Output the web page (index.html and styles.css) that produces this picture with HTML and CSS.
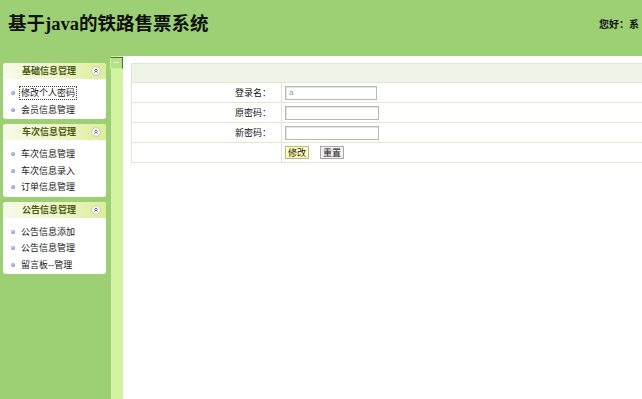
FILE: index.html
```html
<!DOCTYPE html>
<html lang="zh">
<head>
<meta charset="utf-8">
<title>基于java的铁路售票系统</title>
<link rel="stylesheet" href="styles.css">
</head>
<body>
<div class="page">
  <header class="top">
    <h1 class="title">基于java的铁路售票系统</h1>
    <div class="user">您好：系</div>
  </header>
  <div class="content">
    <aside class="sidebar">
      <section class="panel">
        <div class="panel-head">
          <span class="panel-title">基础信息管理</span>
          <svg class="fold" width="10" height="10" viewBox="0 0 10 10"><circle cx="5" cy="5" r="4.4" fill="#f6f6f2" stroke="#c4c4bc" stroke-width="0.8"/><path d="M3.3 4.6 L5 3 L6.7 4.6 M3.3 6.6 L5 5 L6.7 6.6" fill="none" stroke="#666" stroke-width="0.9"/></svg>
        </div>
        <ul class="menu">
          <li><span class="dot"></span><span class="link focused">修改个人密码</span></li>
          <li><span class="dot"></span><span class="link">会员信息管理</span></li>
        </ul>
      </section>
      <section class="panel">
        <div class="panel-head">
          <span class="panel-title">车次信息管理</span>
          <svg class="fold" width="10" height="10" viewBox="0 0 10 10"><circle cx="5" cy="5" r="4.4" fill="#f6f6f2" stroke="#c4c4bc" stroke-width="0.8"/><path d="M3.3 4.6 L5 3 L6.7 4.6 M3.3 6.6 L5 5 L6.7 6.6" fill="none" stroke="#666" stroke-width="0.9"/></svg>
        </div>
        <ul class="menu">
          <li><span class="dot"></span><span class="link">车次信息管理</span></li>
          <li><span class="dot"></span><span class="link">车次信息录入</span></li>
          <li><span class="dot"></span><span class="link">订单信息管理</span></li>
        </ul>
      </section>
      <section class="panel">
        <div class="panel-head">
          <span class="panel-title">公告信息管理</span>
          <svg class="fold" width="10" height="10" viewBox="0 0 10 10"><circle cx="5" cy="5" r="4.4" fill="#f6f6f2" stroke="#c4c4bc" stroke-width="0.8"/><path d="M3.3 4.6 L5 3 L6.7 4.6 M3.3 6.6 L5 5 L6.7 6.6" fill="none" stroke="#666" stroke-width="0.9"/></svg>
        </div>
        <ul class="menu">
          <li><span class="dot"></span><span class="link">公告信息添加</span></li>
          <li><span class="dot"></span><span class="link">公告信息管理</span></li>
          <li><span class="dot"></span><span class="link">留言板--管理</span></li>
        </ul>
      </section>
    </aside>
    <div class="splitter">
      <span class="toggle"></span>
    </div>
    <main class="main">
      <table class="form">
        <tr class="head"><th colspan="2"></th></tr>
        <tr><td class="label">登录名：</td><td class="field"><input class="input readonly" type="text" value="a" readonly></td></tr>
        <tr><td class="label">原密码：</td><td class="field"><input class="input wide" type="password"></td></tr>
        <tr><td class="label">新密码：</td><td class="field"><input class="input wide" type="password"></td></tr>
        <tr><td class="label"></td><td class="field"><div class="buttons"><button class="btn primary" type="button">修改</button><button class="btn" type="button">重置</button></div></td></tr>
      </table>
    </main>
  </div>
</div>
</body>
</html>
```
FILE: styles.css
```css
html, body {
  margin: 0;
  padding: 0;
  background: #ffffff;
  overflow: hidden;
}
.page {
  width: 642px;
  height: 399px;
  display: flex;
  flex-direction: column;
  overflow: hidden;
  font-family: "Noto Sans CJK SC", "Liberation Sans", sans-serif;
  font-size: 9px;
  color: #222;
}
.top {
  flex: 0 0 56px;
  background: #9dcf74;
  display: flex;
  align-items: flex-start;
  white-space: nowrap;
  overflow: hidden;
}
.title {
  flex: 0 0 591px;
  margin: 0;
  padding: 12px 0 0 8px;
  font-family: "Liberation Serif", "Noto Sans CJK SC", serif;
  font-size: 18.5px;
  line-height: 24px;
  font-weight: bold;
  color: #111;
}
.user {
  padding-top: 18px;
  font-family: "Liberation Serif", "Noto Sans CJK SC", serif;
  font-size: 10px;
  line-height: 14px;
  font-weight: bold;
  color: #111;
}
.content {
  flex: 1;
  display: flex;
  min-height: 0;
}
.sidebar {
  flex: 0 0 111px;
  background: #9dcf74;
  padding: 7px 0 0 3px;
  box-sizing: border-box;
}
.panel {
  width: 103px;
  background: #ffffff;
  border-radius: 3px;
  margin-bottom: 5px;
  overflow: hidden;
}
.panel-head {
  height: 16px;
  display: flex;
  align-items: center;
  background: linear-gradient(to right, #f8faea 0%, #eef5c6 55%, #dcee9a 100%);
  padding: 0 5px 0 0;
}
.panel-title {
  flex: 1;
  text-align: center;
  font-weight: bold;
  color: #4b5a12;
  font-size: 9px;
  line-height: 16px;
  padding-left: 4px;
}
.fold {
  display: block;
}
.menu {
  list-style: none;
  margin: 0;
  padding: 6px 0 1px 0;
}
.menu li {
  height: 16.5px;
  display: flex;
  align-items: center;
  padding-left: 8px;
}
.dot {
  width: 4px;
  height: 4px;
  border-radius: 50%;
  background: radial-gradient(circle at 40% 40%, #c6d6f2 0%, #7f9bd2 60%, #5f7cb6 100%);
  margin-right: 6px;
}
.link {
  color: #1a1a1a;
  line-height: 12px;
  padding: 0 1px;
  margin-left: -1px;
}
.link.focused {
  outline: 1px dotted #444;
  outline-offset: 0;
}
.splitter {
  flex: 0 0 12px;
  background: #d3f3a2;
  position: relative;
}
.toggle {
  position: absolute;
  left: -1px;
  top: 1px;
  width: 11px;
  height: 10px;
  background: #b3e28a;
  border-top: 1px solid #50683a;
  border-right: 1px solid #50683a;
  border-left: 1px solid #c9ef9f;
  border-bottom: 1px solid #c9ef9f;
}
.toggle::after {
  content: "";
  position: absolute;
  left: 3px;
  top: 4px;
  width: 5px;
  height: 1px;
  background: #e4f6cf;
}
.main {
  flex: 1;
  padding: 7px 0 0 8px;
  overflow: hidden;
}
.form {
  width: 640px;
  border-collapse: collapse;
  border: 1px solid #dde6c6;
}
.form td, .form th {
  border: 1px solid #e0e9cc;
  padding: 0;
}
.form .head th {
  height: 18px;
  background: #eef4e8;
}
.form td {
  height: 19px;
}
.label {
  width: 139px;
  text-align: right;
  padding-right: 10px !important;
  color: #111;
}
.field {
  padding-left: 3px !important;
}
.input {
  display: block;
  box-sizing: border-box;
  width: 92px;
  height: 14px;
  border: 1px solid #b8b8b8;
  box-shadow: inset 1px 1px 0 #e2e2e2;
  padding: 0 3px;
  font-family: "Liberation Sans", "Noto Sans CJK SC", sans-serif;
  font-size: 8px;
  color: #999;
  background: #fff;
}
.input.wide {
  width: 94px;
}
.buttons {
  display: flex;
  align-items: center;
}
.btn {
  box-sizing: border-box;
  height: 13px;
  width: 24px;
  padding: 0;
  margin-right: 11px;
  border: 1px solid #a8a8a8;
  background: #f2f2f2;
  font-family: "Noto Sans CJK SC", sans-serif;
  font-size: 9px;
  line-height: 11px;
  color: #222;
}
.btn.primary {
  background: #ffffb8;
  border-color: #b8b890;
}
```
